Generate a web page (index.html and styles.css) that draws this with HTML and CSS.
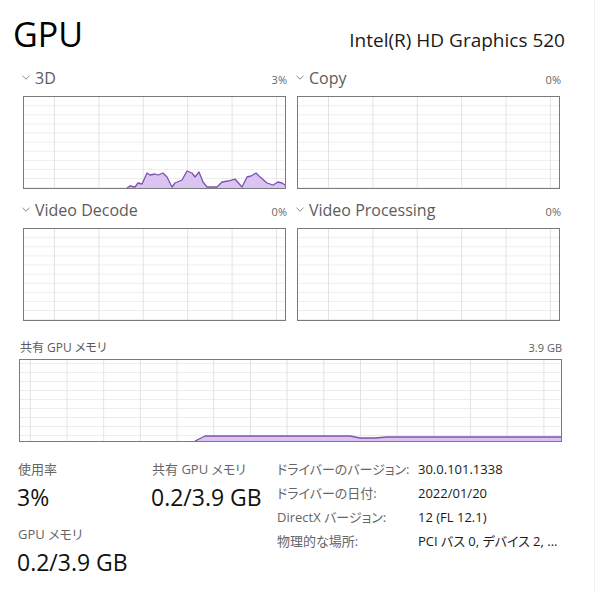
FILE: index.html
```html
<!DOCTYPE html>
<html lang="ja">
<head>
<meta charset="utf-8">
<title>GPU</title>
<link rel="stylesheet" href="styles.css">
</head>
<body>
<div class="page">
  <header class="head">
    <h1 class="title">GPU</h1>
    <div class="model">Intel(R) HD Graphics 520</div>
  </header>

  <section class="engines">
    <div class="engine">
      <div class="eng-head">
        <span class="eng-name"><svg class="chev" viewBox="0 0 8 5" width="8" height="5"><path d="M0.5 0.8 L4 4.2 L7.5 0.8"/></svg>3D</span>
        <span class="pct">3%</span>
      </div>
      <div class="chart small">
        <svg class="plot" viewBox="0 0 261 91" preserveAspectRatio="none">
          <path class="area" d="M103 91 L106 89 L111 90 L114 86 L118 87 L123 76 L126 78 L131 77 L134 78 L139 76 L143 80 L148 90 L151 86 L158 83 L163 74 L168 76 L171 80 L175 75 L179 85 L183 90 L193 90 L198 85 L204 84 L211 82 L218 90 L223 80 L227 79 L232 76 L235 79 L243 86 L249 88 L254 85 L258 86 L261 88 L261 91 Z"/>
          <path class="line" d="M103 91 L106 89 L111 90 L114 86 L118 87 L123 76 L126 78 L131 77 L134 78 L139 76 L143 80 L148 90 L151 86 L158 83 L163 74 L168 76 L171 80 L175 75 L179 85 L183 90 L193 90 L198 85 L204 84 L211 82 L218 90 L223 80 L227 79 L232 76 L235 79 L243 86 L249 88 L254 85 L258 86 L261 88"/>
        </svg>
      </div>
    </div>
    <div class="engine">
      <div class="eng-head">
        <span class="eng-name"><svg class="chev" viewBox="0 0 8 5" width="8" height="5"><path d="M0.5 0.8 L4 4.2 L7.5 0.8"/></svg>Copy</span>
        <span class="pct">0%</span>
      </div>
      <div class="chart small"></div>
    </div>
    <div class="engine">
      <div class="eng-head">
        <span class="eng-name"><svg class="chev" viewBox="0 0 8 5" width="8" height="5"><path d="M0.5 0.8 L4 4.2 L7.5 0.8"/></svg>Video Decode</span>
        <span class="pct">0%</span>
      </div>
      <div class="chart small"></div>
    </div>
    <div class="engine">
      <div class="eng-head">
        <span class="eng-name"><svg class="chev" viewBox="0 0 8 5" width="8" height="5"><path d="M0.5 0.8 L4 4.2 L7.5 0.8"/></svg>Video Processing</span>
        <span class="pct">0%</span>
      </div>
      <div class="chart small"></div>
    </div>
  </section>

  <section class="memory">
    <div class="mem-head">
      <span class="mem-name">共有 GPU メモリ</span>
      <span class="mem-max">3.9 GB</span>
    </div>
    <div class="chart wide">
      <svg class="plot" viewBox="0 0 541 81" preserveAspectRatio="none">
        <path class="area" d="M175 81 L185 76 L330 76 L340 78 L355 78 L367 77 L541 77 L541 81 Z"/>
        <path class="line" d="M175 81 L185 76 L330 76 L340 78 L355 78 L367 77 L541 77"/>
      </svg>
    </div>
  </section>

  <section class="stats">
    <div class="stat-col col-a">
      <div class="stat-label">使用率</div>
      <div class="stat-value">3%</div>
      <div class="stat-label second">GPU メモリ</div>
      <div class="stat-value">0.2/3.9 GB</div>
    </div>
    <div class="stat-col col-b">
      <div class="stat-label">共有 GPU メモリ</div>
      <div class="stat-value">0.2/3.9 GB</div>
    </div>
    <dl class="info">
      <dt>ドライバーのバージョン:</dt><dd>30.0.101.1338</dd>
      <dt>ドライバーの日付:</dt><dd>2022/01/20</dd>
      <dt>DirectX バージョン:</dt><dd>12 (FL 12.1)</dd>
      <dt>物理的な場所:</dt><dd>PCI バス 0, デバイス 2, ...</dd>
    </dl>
  </section>
</div>
</body>
</html>
```

FILE: styles.css
```css
* { box-sizing: border-box; }

html, body {
  margin: 0;
  padding: 0;
  background: #ffffff;
}

body {
  font-family: "Open Sans", "Noto Sans CJK JP", sans-serif;
  font-feature-settings: "palt";
  color: #1a1a1a;
}

.page {
  width: 595px;
  height: 592px;
  border-right: 1px solid #eeeeee;
  padding-top: 14px;
}

/* header */
.head {
  display: flex;
  align-items: baseline;
  justify-content: space-between;
  padding: 0 29px 0 13px;
  height: 40px;
}

.title {
  margin: 0;
  font-size: 34px;
  line-height: 40px;
  font-weight: 400;
  color: #000;
}

.model {
  font-size: 19px;
  color: #1a1a1a;
}

/* engines */
.engines {
  display: grid;
  grid-template-columns: 265px 265px;
  column-gap: 9px;
  row-gap: 10px;
  margin: 13px 0 0 22px;
}

.eng-head {
  display: flex;
  align-items: baseline;
  justify-content: space-between;
  height: 22px;
  line-height: 22px;
  margin-bottom: 7px;
}

.eng-name {
  font-size: 16px;
  color: #5c5c5c;
}

.chev {
  fill: none;
  stroke: #8a8a8a;
  stroke-width: 1;
  margin-right: 5px;
  vertical-align: 4px;
}

.pct {
  font-size: 11px;
  color: #666;
}

.chart {
  position: relative;
  border: 1px solid #7a7a7a;
  background-color: #fff;
}

.chart.small {
  width: 263px;
  height: 93px;
  margin-left: 1px;
  background-image:
    linear-gradient(to right, #e3e3e3 1px, transparent 1px),
    linear-gradient(to bottom, #ececec 1px, transparent 1px);
  background-size: 44.4px 100%, 100% 9.1px;
  background-position: 30px 0, 0 8.3px;
}

.plot {
  display: block;
  width: 100%;
  height: 100%;
}

.area {
  fill: #dac4f2;
  stroke: none;
}

.line {
  fill: none;
  stroke: #7f52ad;
  stroke-width: 1.3;
  stroke-linejoin: round;
}

/* memory */
.memory {
  margin: 19px 0 0 19px;
  width: 543px;
}

.mem-head {
  display: flex;
  align-items: baseline;
  justify-content: space-between;
  height: 16px;
  line-height: 16px;
  margin: 0 0 3px 1px;
}

.mem-name {
  font-size: 12px;
  color: #5c5c5c;
}

.mem-max {
  font-size: 11px;
  color: #5c5c5c;
}

.chart.wide {
  width: 543px;
  height: 83px;
  background-image:
    linear-gradient(to right, #e3e3e3 1px, transparent 1px),
    linear-gradient(to bottom, #ececec 1px, transparent 1px);
  background-size: 36.7px 100%, 100% 9px;
  background-position: 9.8px 0, 0 3px;
}

/* stats */
.stats {
  display: flex;
  margin: 15px 0 0 18px;
}

.stat-col {
  display: flex;
  flex-direction: column;
}

.col-a { width: 134px; }
.col-b { width: 125px; }

.stat-label {
  font-size: 13px;
  line-height: 24px;
  height: 24px;
  color: #666;
}

.stat-label.second {
  margin-top: 10px;
}

.stat-value {
  font-size: 23px;
  line-height: 30px;
  height: 30px;
  margin-top: 1px;
  margin-left: -1px;
  color: #111;
}

.info {
  display: grid;
  grid-template-columns: 141px auto;
  grid-auto-rows: 24px;
  margin: 0;
  font-size: 13px;
  line-height: 24px;
}

.info dt,
.info dd {
  height: 24px;
  overflow: hidden;
  white-space: nowrap;
}

.info dt {
  color: #666;
}

.info dd {
  margin: 0;
  color: #1a1a1a;
}
```
